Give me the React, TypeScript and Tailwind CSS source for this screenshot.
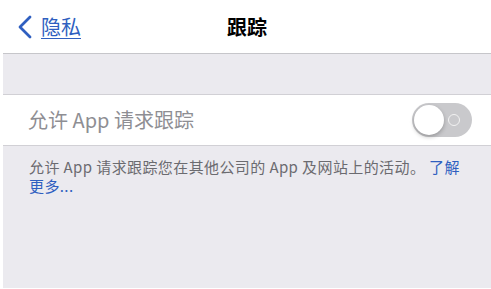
const font = { fontFamily: '"Noto Sans CJK SC", "Noto Sans", sans-serif' };

const Toggle = () => (
  <div className="relative w-[60px] h-[34px] rounded-full bg-[#c9c9cc] flex items-center justify-end pr-[12px]">
    <div className="w-[12px] h-[12px] rounded-full border-[1.5px] border-[#f2f2f2]" />
    <div className="absolute left-[2px] top-[2px] w-[30px] h-[30px] rounded-full bg-white shadow-[0_2px_4px_rgba(0,0,0,0.25)]" />
  </div>
);

export default function App() {
  return (
    <div className="w-[491px] h-[289px] bg-white pl-[3px] pb-[1px]" style={font}>
      <div className="h-full bg-[#ebeaef] flex flex-col">
        <nav className="h-[54px] shrink-0 bg-white border-b border-[#c6c6ca] grid grid-cols-[1fr_auto_1fr] items-center">
          <div className="flex items-center pl-[13px] text-[#2f5fc0]">
            <svg width="17" height="26" viewBox="0 0 17 26" fill="none">
              <path d="M14 3 L4 13 L14 23" stroke="currentColor" strokeWidth="2.8" strokeLinecap="round" strokeLinejoin="round" />
            </svg>
            <span className="ml-[8px] text-[20px] leading-none underline underline-offset-[3px] decoration-[1px]">隐私</span>
          </div>
          <div className="text-[20px] font-semibold text-black leading-none">跟踪</div>
          <div />
        </nav>
        <div className="h-[40px] shrink-0" />
        <div className="h-[52px] shrink-0 bg-white border-y border-[#d1d0d5] flex items-center justify-between pl-[25px] pr-[19px]">
          <span className="text-[20px] text-[#8e8e93] leading-none">允许 App 请求跟踪</span>
          <Toggle />
        </div>
        <p className="pl-[26px] pr-[26px] pt-[11px] text-[15px] leading-[19px] tracking-[0.4px] text-[#6b6b70]">
          允许 App 请求跟踪您在其他公司的 App 及网站上的活动。 <span className="text-[#2f5fc0]">了解更多...</span>
        </p>
      </div>
    </div>
  );
}
